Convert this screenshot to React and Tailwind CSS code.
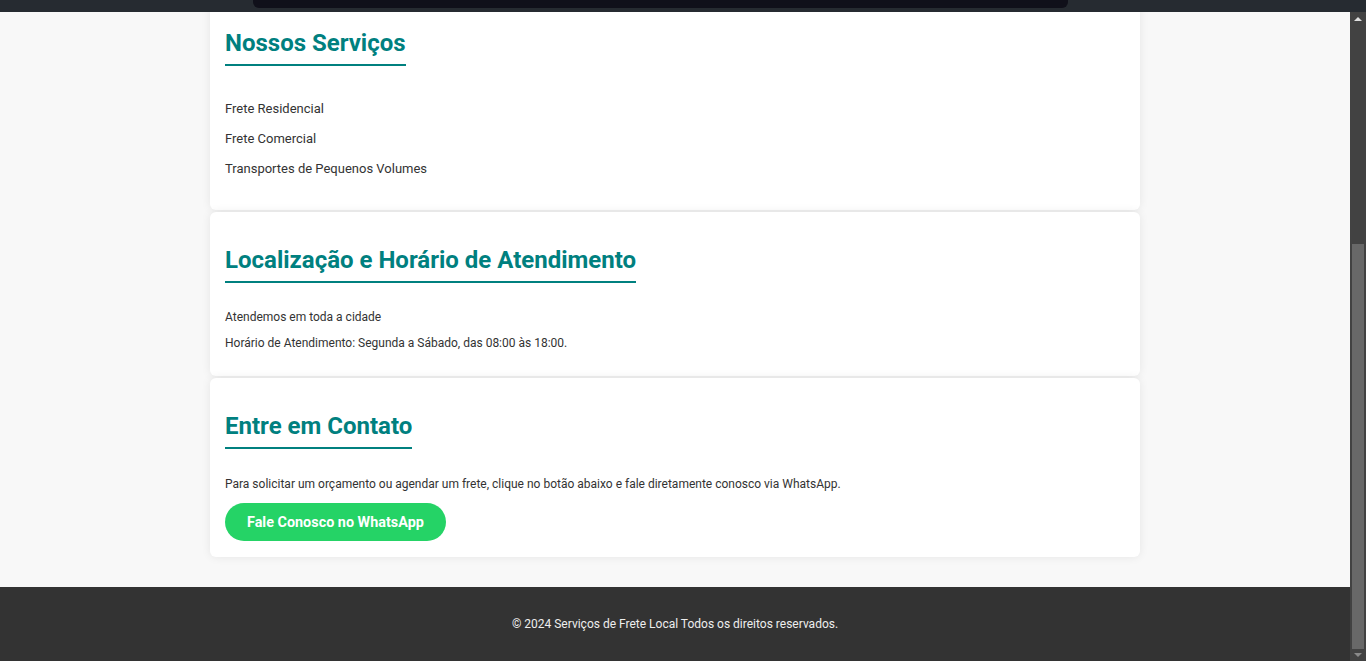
const SERVICES = ['Frete Residencial', 'Frete Comercial', 'Transportes de Pequenos Volumes']

function Heading({ children }) {
  return (
    <h2 className="inline-block text-[24px] leading-[28px] font-bold text-[#00807f] pb-[7px] border-b-2 border-[#00807f]">
      {children}
    </h2>
  )
}

function Card({ className = '', children }) {
  return (
    <section className={`w-[930px] mx-auto bg-white rounded-[6px] shadow-[0_0_10px_rgba(0,0,0,0.08)] px-[15px] pt-[34px] ${className}`}>
      {children}
    </section>
  )
}

function Scrollbar() {
  return (
    <div className="w-[16px] bg-[#424242] flex flex-col items-center shrink-0">
      <div className="h-[14px] flex items-center justify-center">
        <div className="w-0 h-0 border-l-[4px] border-r-[4px] border-b-[4px] border-l-transparent border-r-transparent border-b-[#e0e0e0]" />
      </div>
      <div className="flex-1 w-full flex flex-col justify-end px-[2px]">
        <div className="h-[405px] bg-[#686868]" />
      </div>
      <div className="h-[12px] flex items-center justify-center">
        <div className="w-0 h-0 border-l-[4px] border-r-[4px] border-t-[4px] border-l-transparent border-r-transparent border-t-[#8a8a8a]" />
      </div>
    </div>
  )
}

export default function App() {
  return (
    <div className="h-[661px] w-[1366px] overflow-hidden flex flex-col text-[#333]" style={{ fontFamily: 'Roboto, "Liberation Sans", sans-serif' }}>
      <div className="h-[12px] bg-[#262b31] shrink-0 relative z-10">
        <div className="ml-[253px] w-[815px] h-[8px] bg-[#10101a] rounded-b-[6px]" />
      </div>

      <div className="flex-1 flex min-h-0">
        <main className="flex-1 bg-[#f8f8f8] flex flex-col justify-end overflow-hidden">
          <div className="flex flex-col gap-[2px]">
            <Card className="pb-[34px]">
              <Heading>Nossos Serviços</Heading>
              <ul className="mt-[35px] flex flex-col gap-[15px] text-[13px] leading-[15px]">
                {SERVICES.map(s => <li key={s}>{s}</li>)}
              </ul>
            </Card>

            <Card className="pb-[26px]">
              <Heading>Localização e Horário de Atendimento</Heading>
              <p className="mt-[27px] text-[12px] leading-[14px]">Atendemos em toda a cidade</p>
              <p className="mt-[12px] text-[12px] leading-[14px]">Horário de Atendimento: Segunda a Sábado, das 08:00 às 18:00.</p>
            </Card>

            <Card className="pb-[16px]">
              <Heading>Entre em Contato</Heading>
              <p className="mt-[28px] text-[12px] leading-[14px]">
                Para solicitar um orçamento ou agendar um frete, clique no botão abaixo e fale diretamente conosco via WhatsApp.
              </p>
              <a href="#" className="mt-[12px] inline-flex items-center justify-center h-[38px] pt-[1px] px-[22px] rounded-full bg-[#25d366] text-white text-[14.4px] font-bold">
                Fale Conosco no WhatsApp
              </a>
            </Card>
          </div>

          <footer className="mt-[30px] h-[74px] shrink-0 bg-[#333] text-[#eee] text-[12px] flex items-center justify-center">
            © 2024 Serviços de Frete Local Todos os direitos reservados.
          </footer>
        </main>
        <Scrollbar />
      </div>
    </div>
  )
}
